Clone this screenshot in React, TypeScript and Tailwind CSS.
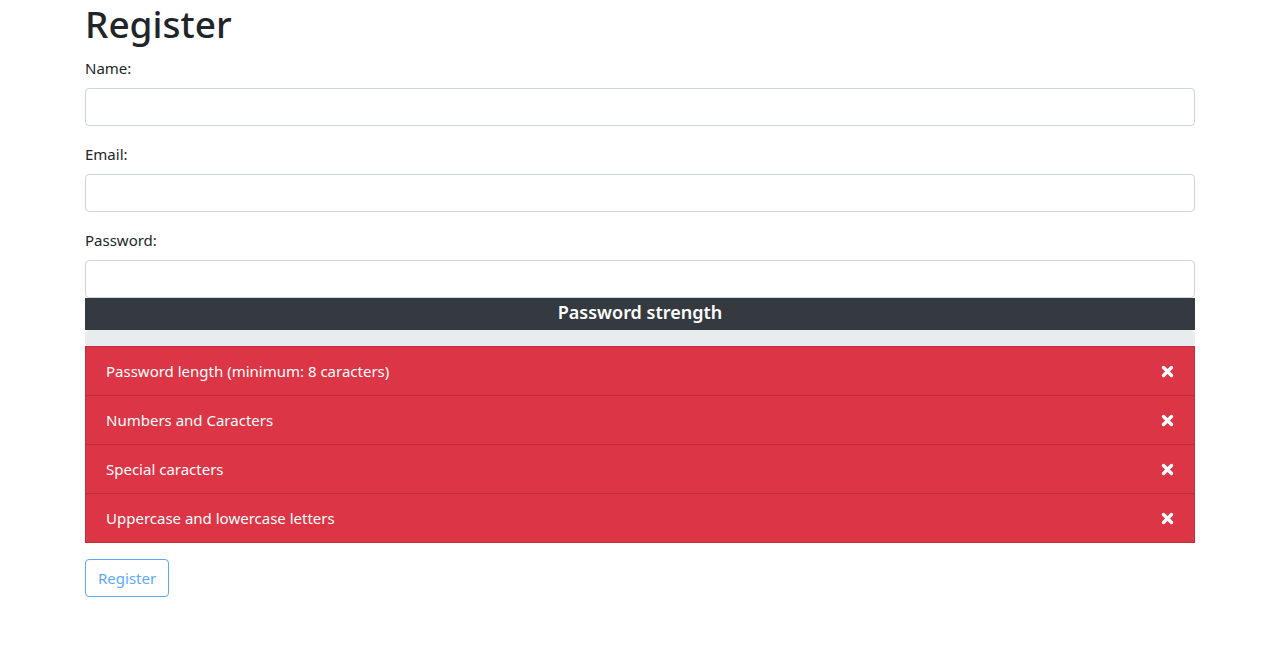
import React from "react"

const rules = [
  "Password length (minimum: 8 caracters)",
  "Numbers and Caracters",
  "Special caracters",
  "Uppercase and lowercase letters",
]

function TimesIcon() {
  return (
    <svg width="13" height="13" viewBox="0 0 13 13" aria-hidden="true">
      <path d="M2.5 2.5 L10.5 10.5 M10.5 2.5 L2.5 10.5" stroke="#fff" strokeWidth="3.4" strokeLinecap="round" />
    </svg>
  )
}

function Field({ label, type = "text" }: { label: string; type?: string }) {
  return (
    <div className="mb-4">
      <label className="block mb-2 leading-6 text-[15px] text-[#212529]">{label}</label>
      <input
        type={type}
        className="block w-full h-[38px] px-3 rounded-[4px] border border-[#ced4da] bg-white text-[15px] outline-none"
      />
    </div>
  )
}

export default function App() {
  return (
    <div className="min-h-[657px] bg-white" style={{ fontFamily: '"Segoe UI", "Noto Sans", "Liberation Sans", sans-serif' }}>
      <div className="w-[1110px] mx-auto">
        <h1 className="text-[37px] leading-[50px] -mt-[1px] font-medium text-[#212529] mb-[7px]">Register</h1>

        <Field label="Name:" />
        <Field label="Email:" />

        <div>
          <label className="block mb-2 leading-6 text-[15px] text-[#212529]">Password:</label>
          <input
            type="password"
            className="block w-full h-[38px] px-3 rounded-[4px] border border-[#ced4da] bg-white text-[15px] outline-none"
          />
        </div>

        {/* Bloc force du mot de passe */}
        <div className="h-[32px] bg-[#343a40] flex items-center justify-center pb-[5px]">
          <span className="text-white text-[18px] font-semibold leading-6">Password strength</span>
        </div>
        <div className="h-[16px] bg-[#e9ecef] rounded-[4px]" />

        <ul className="flex flex-col">
          {rules.map((r, i) => (
            <li
              key={r}
              className={
                "flex items-center justify-between h-[50px] px-5 bg-[#dc3545] border border-[rgba(0,0,0,0.125)] text-white text-[15px] " +
                (i > 0 ? "-mt-px" : "")
              }
            >
              <span>{r}</span>
              <TimesIcon />
            </li>
          ))}
        </ul>

        <button
          disabled
          className="mt-4 h-[38px] px-3 rounded-[4px] border border-[#007bff] text-[#007bff] text-[15px] opacity-65 bg-transparent"
        >
          Register
        </button>
      </div>
    </div>
  )
}
